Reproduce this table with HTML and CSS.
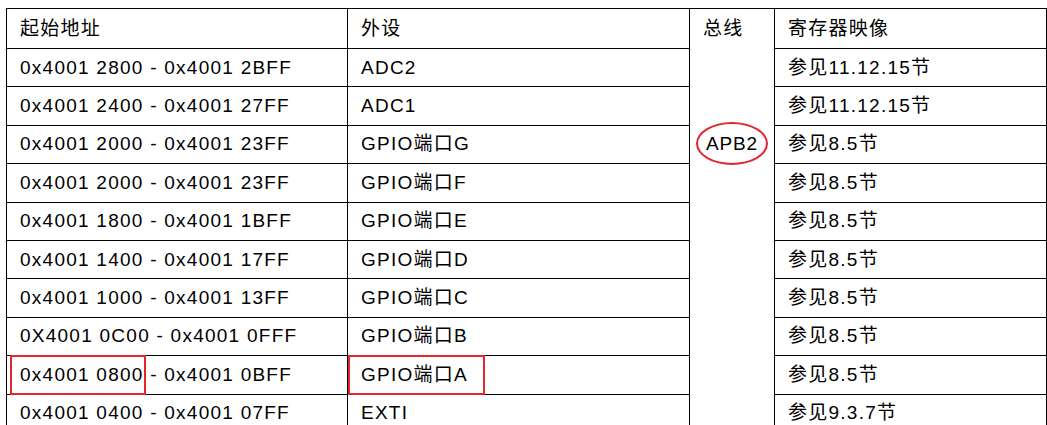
FILE: index.html
```html
<!DOCTYPE html>
<html lang="zh-CN">
<head>
<meta charset="utf-8">
<title>存储器映像</title>
<link rel="stylesheet" href="styles.css">
</head>
<body>
<table class="map">
  <colgroup>
    <col class="c-addr">
    <col class="c-per">
    <col class="c-bus">
    <col class="c-reg">
  </colgroup>
  <tr class="head">
    <td>起始地址</td>
    <td>外设</td>
    <td class="bus" rowspan="11">
      <div class="bus-label">总线</div>
      <div class="bus-oval">APB2</div>
    </td>
    <td>寄存器映像</td>
  </tr>
  <tr><td>0x4001 2800 - 0x4001 2BFF</td><td>ADC2</td><td>参见11.12.15节</td></tr>
  <tr><td>0x4001 2400 - 0x4001 27FF</td><td>ADC1</td><td>参见11.12.15节</td></tr>
  <tr><td>0x4001 2000 - 0x4001 23FF</td><td>GPIO端口G</td><td>参见8.5节</td></tr>
  <tr><td>0x4001 2000 - 0x4001 23FF</td><td>GPIO端口F</td><td>参见8.5节</td></tr>
  <tr><td>0x4001 1800 - 0x4001 1BFF</td><td>GPIO端口E</td><td>参见8.5节</td></tr>
  <tr><td>0x4001 1400 - 0x4001 17FF</td><td>GPIO端口D</td><td>参见8.5节</td></tr>
  <tr><td>0x4001 1000 - 0x4001 13FF</td><td>GPIO端口C</td><td>参见8.5节</td></tr>
  <tr><td>0X4001 0C00 - 0x4001 0FFF</td><td>GPIO端口B</td><td>参见8.5节</td></tr>
  <tr>
    <td class="marked"><span class="box box-addr"></span>0x4001 0800 - 0x4001 0BFF</td>
    <td class="marked"><span class="box box-per"></span>GPIO端口A</td>
    <td>参见8.5节</td>
  </tr>
  <tr><td>0x4001 0400 - 0x4001 07FF</td><td>EXTI</td><td>参见9.3.7节</td></tr>
</table>
</body>
</html>
```
FILE: styles.css
```css
html, body {
  background: #fff;
}

body {
  margin: 8px 0 0 6px;
  font-family: "Liberation Sans", "Noto Sans CJK SC", sans-serif;
  font-size: 19px;
  letter-spacing: 1.25px;
  color: #000;
}

.map {
  border-collapse: collapse;
  table-layout: fixed;
  width: 1040px;
}

.c-addr { width: 341px; }
.c-per { width: 342px; }
.c-bus { width: 85px; }
.c-reg { width: 272px; }

.map td {
  border: 1px solid #000;
  padding: 0 0 0 13px;
  height: 37.4px;
  vertical-align: middle;
  white-space: nowrap;
  line-height: 22px;
}

.map tr.head td {
  height: 39px;
}

.map td.bus {
  vertical-align: top;
  padding: 0;
}

.bus-label {
  height: 39px;
  line-height: 39px;
  padding-left: 13px;
}

.bus-oval {
  width: 72px;
  height: 43px;
  margin: 74px auto 0;
  border: 2px solid #e3262e;
  border-radius: 50%;
  box-sizing: border-box;
  display: flex;
  align-items: center;
  justify-content: center;
  letter-spacing: 0.8px;
}

.marked {
  position: relative;
}

.box {
  position: absolute;
  top: -1px;
  bottom: -1px;
  border: 2px solid #e3262e;
  box-sizing: border-box;
}

.box-addr {
  left: 3px;
  width: 136px;
}

.box-per {
  left: 0;
  width: 137px;
}
```
